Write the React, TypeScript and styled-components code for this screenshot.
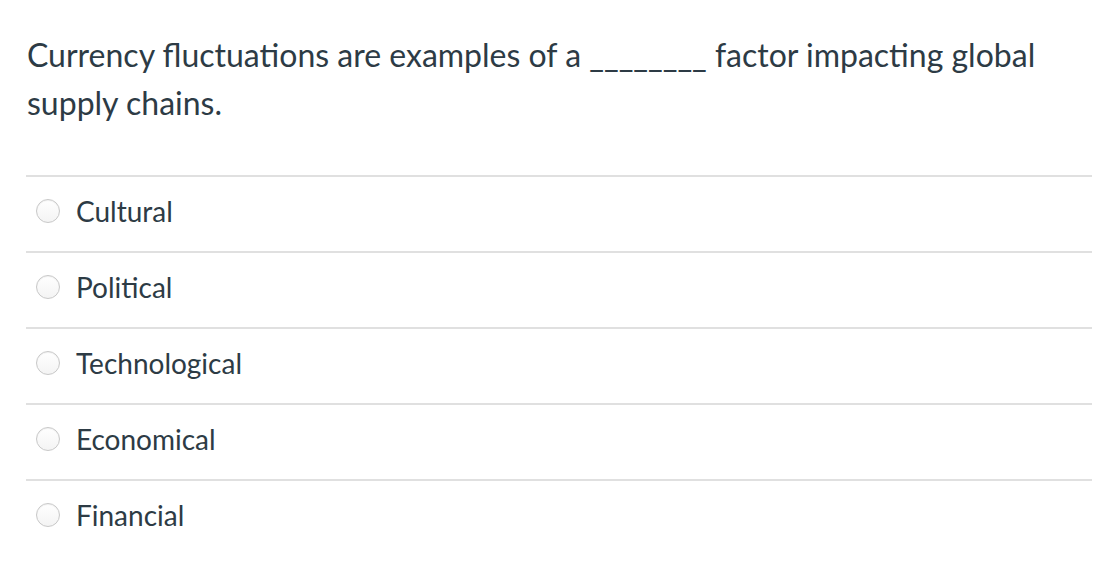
import React from 'react'
import styled, { createGlobalStyle } from 'styled-components'

const GlobalStyle = createGlobalStyle`
  html, body {
    margin: 0;
    padding: 0;
    background: #ffffff;
  }
  body {
    font-family: Lato, "Liberation Sans", sans-serif;
    color: #2d3b45;
  }
`

const Page = styled.div`
  width: 1066px;
  padding: 31px 0 0 26px;
`

const Question = styled.p`
  margin: 0 0 48px 1px;
  font-size: 32px;
  line-height: 48px;
  font-weight: 400;
  width: 1040px;
`

const Answers = styled.ul`
  list-style: none;
  margin: 0;
  padding: 0;
`

const Answer = styled.li`
  box-sizing: border-box;
  display: flex;
  align-items: center;
  height: 76px;
  border-top: 2px solid #e0e0e0;
  padding: 0 0 6px 10px;
`

const Radio = styled.span`
  box-sizing: border-box;
  width: 24px;
  height: 24px;
  border-radius: 50%;
  border: 1px solid #c8c8c8;
  background: linear-gradient(180deg, #ffffff 0%, #f4f4f4 100%);
  box-shadow: inset 0 1px 1px rgba(0, 0, 0, 0.06);
  flex-shrink: 0;
`

const Label = styled.span`
  margin-left: 16px;
  font-size: 28px;
  line-height: 32px;
`

const options = ['Cultural', 'Political', 'Technological', 'Economical', 'Financial']

export default function App() {
  return (
    <>
      <GlobalStyle />
      <Page>
        <Question>
          Currency fluctuations are examples of a ________ factor impacting global supply chains.
        </Question>
        <Answers>
          {options.map(option => (
            <Answer key={option}>
              <Radio />
              <Label>{option}</Label>
            </Answer>
          ))}
        </Answers>
      </Page>
    </>
  )
}
